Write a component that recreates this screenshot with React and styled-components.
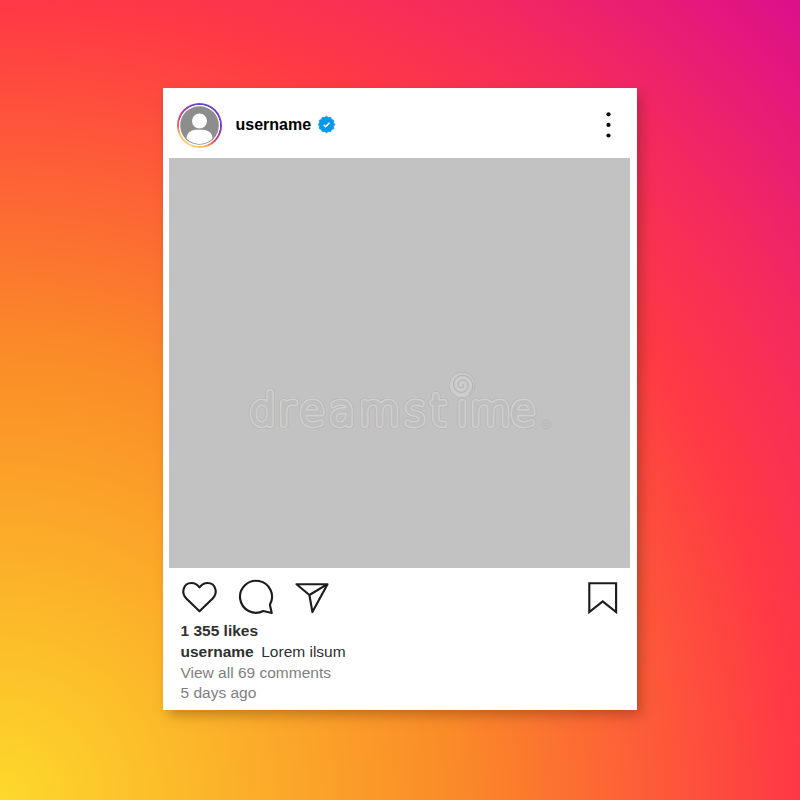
import React from "react";
import styled, { createGlobalStyle } from "styled-components";

const GlobalStyle = createGlobalStyle`
  body { margin: 0; }
  * { box-sizing: border-box; }
`;

const Page = styled.main`
  display: grid;
  place-items: center;
  width: 800px;
  height: 800px;
  padding-bottom: 2px;
  overflow: hidden;
  font-family: "Liberation Sans", Arial, sans-serif;
  background: radial-gradient(
    circle 1131px at 0 100%,
    #fdd92b 0%,
    #fa8a28 40.5%,
    #ff3945 70%,
    #f52b5c 81%,
    #dc0f8b 100%
  );
`;

const Card = styled.article`
  display: flex;
  flex-direction: column;
  width: 474px;
  height: 622px;
  background: #fff;
  box-shadow: 5px 6px 12px -1px rgba(70, 30, 10, 0.34);
`;

const Header = styled.header`
  display: flex;
  align-items: center;
  height: 70px;
  padding: 5px 26px 0 14px;
`;

const HeaderName = styled.h1`
  margin: 0 7px 0 13.5px;
  padding-bottom: 1px;
  font-size: 16px;
  line-height: 20px;
  font-weight: 700;
  color: #000;
`;

const Drawing = styled.svg`
  display: block;
  flex: none;
  overflow: visible;
  margin-left: ${(p) => (p.$end ? "auto" : 0)};
  margin-bottom: ${(p) => p.$lift || 0}px;
`;

const AvatarFrame = styled.div`
  display: grid;
  place-items: center;
  width: 45px;
  height: 45px;
  border-radius: 50%;
  background: radial-gradient(circle, #fff 20.3px, transparent 20.9px),
    conic-gradient(
      #5b48d8 0deg,
      #6a3fd8 60deg,
      #7a36d0 100deg,
      #d42d80 122deg,
      #f0504e 140deg,
      #f8b45c 165deg,
      #fbd873 205deg,
      #f9c062 245deg,
      #ee5a5c 272deg,
      #d92f8f 300deg,
      #8d38c4 330deg,
      #5b48d8 360deg
    );
`;

const Photo = styled.div`
  width: 461px;
  height: 410px;
  margin-left: 6px;
  background: #c2c2c2;
`;

const Actions = styled.div`
  display: flex;
  align-items: flex-start;
  gap: 20px;
  height: 53px;
  padding: 11px 19px 0 18px;
`;

const Caption = styled.div`
  display: grid;
  grid-template-rows: 21px 21px 20px 20px;
  padding-left: 17.5px;
  font-size: 15.5px;
  line-height: 20px;
`;

const Line = styled.p`
  margin: 0;
  color: ${(p) => (p.$muted ? "#808080" : "#303030")};
`;

const Strong = styled.strong`
  margin-right: ${(p) => p.$gap || 0}px;
`;

function Avatar() {
  return (
    <AvatarFrame>
      <Drawing width="39" height="39" viewBox="0 0 39 39">
        <defs>
          <clipPath id="face">
            <circle cx="19.5" cy="19.5" r="18.5" />
          </clipPath>
        </defs>
        <circle cx="19.5" cy="19.5" r="19.3" fill="#8d8d8d" />
        <g clipPath="url(#face)" fill="#fff">
          <circle cx="19.5" cy="15" r="7.5" />
          <path d="M6.500 40v-7.500c0-5 4.500-8.700 9-8.700h8c4.500 0 9 3.700 9 8.700V40z" />
        </g>
      </Drawing>
    </AvatarFrame>
  );
}

function Verified() {
  const points = Array.from({ length: 24 }, (_, i) => {
    const a = (i * Math.PI) / 12;
    const r = i % 2 ? 7.2 : 8.3;
    return `${8.5 + r * Math.sin(a)},${8.5 - r * Math.cos(a)}`;
  }).join(" ");
  return (
    <Drawing width="17" height="17" viewBox="0 0 17 17" $lift={3}>
      <polygon points={points} fill="#0b96ee" stroke="#0b96ee" strokeWidth=".8" strokeLinejoin="round" />
      <path d="m5.600 8.700 2 2 3.900-4" fill="none" stroke="#fff" strokeWidth="1.500" />
    </Drawing>
  );
}

function MoreDots() {
  return (
    <Drawing width="5" height="26" viewBox="0 0 5 26" $end $lift={1} fill="#0b0b0b">
      <circle cx="2.500" cy="2.300" r="2.100" />
      <circle cx="2.500" cy="12.900" r="2.100" />
      <circle cx="2.500" cy="23.500" r="2.100" />
    </Drawing>
  );
}

const outline = {
  height: 37,
  fill: "none",
  stroke: "#1d1d1d",
  strokeWidth: 2.15,
  strokeLinejoin: "round",
};

function Heart() {
  return (
    <Drawing {...outline} width="37" viewBox="0 0 37 37">
      <path d="M18.500 32.300 5.300 19.400C2.500 16.600 1.800 13.500 2.600 10.300 3.500 6.500 6.700 4 10.500 4c3.200 0 6 1.600 8 4.300C20.500 5.600 23.300 4 26.500 4c3.800 0 7 2.500 7.900 6.300.8 3.200.1 6.300-2.700 9.100z" />
    </Drawing>
  );
}

function Comment() {
  return (
    <Drawing {...outline} width="36" viewBox="0 0 36 37">
      <path d="M31.900 25.700A16 16 0 1 0 25.300 32L33.700 34z" />
    </Drawing>
  );
}

function Share() {
  return (
    <Drawing {...outline} width="36" viewBox="0 0 36 37">
      <path d="M2.500 5.200h31L18.400 33 15.400 16z M15.400 16 33.500 5.200" />
    </Drawing>
  );
}

function Bookmark() {
  return (
    <Drawing {...outline} width="32" viewBox="0 0 32 37" $end strokeLinejoin="miter">
      <path d="M3.300 4.200h26.800V33L16.700 22.300 3.300 33z" />
    </Drawing>
  );
}

const WatermarkText = styled.text`
  font-family: "DejaVu Sans Light", "DejaVu Sans", sans-serif;
  font-size: 42px;
  font-weight: 200;
  stroke: ${(p) => p.$tone};
  fill: ${(p) => p.$tone};
  stroke-width: ${(p) => p.$weight}px;
  stroke-linejoin: round;
`;

const TONES = [
  ["#b3b3b3", 7.2],
  ["#d0d0d0", 5.8],
  ["#bfbfbf", 2.8],
];

const LETTER_X = "249 278 299 329 359 404 430 456.500 470 510";

const SWIRL = Array.from({ length: 61 }, (_, i) => {
  const angle = -1 + (i / 60) * Math.PI * 4.6;
  const radius = 0.8 + (i / 60) * 10.6;
  const x = 462 + radius * Math.cos(angle);
  const y = 385 + radius * Math.sin(angle);
  return `${x.toFixed(2)},${y.toFixed(2)}`;
}).join(" ");

function Watermark() {
  return (
    <Drawing width="461" height="410" viewBox="169 158 461 410">
      {TONES.map(([tone, weight]) => (
        <WatermarkText
          key={tone}
          x={LETTER_X}
          y="425"
          $tone={tone}
          $weight={weight}
          aria-hidden={weight < 7}
        >
          dreamstime
        </WatermarkText>
      ))}
      <circle cx="462" cy="385" r="13" fill="#b5b5b5" />
      <circle cx="462" cy="385" r="12.300" fill="#cdcdcd" />
      <polyline points={SWIRL} fill="none" stroke="#b5b5b5" strokeWidth="1.300" strokeLinecap="round" />
      <g fill="none" stroke="#b2b2b2" strokeWidth=".8">
        <circle cx="546.500" cy="424.500" r="4.500" />
        <circle cx="546.500" cy="424.500" r="2" />
      </g>
    </Drawing>
  );
}

export default function App() {
  return (
    <>
      <GlobalStyle />
      <Page>
        <Card>
          <Header>
            <Avatar />
            <HeaderName>username</HeaderName>
            <Verified />
            <MoreDots />
          </Header>
          <Photo>
            <Watermark />
          </Photo>
          <Actions>
            <Heart />
            <Comment />
            <Share />
            <Bookmark />
          </Actions>
          <Caption>
            <Line><Strong>1 355 likes</Strong></Line>
            <Line><Strong $gap={7.500}>username</Strong>Lorem ilsum</Line>
            <Line $muted>View all 69 comments</Line>
            <Line $muted>5 days ago</Line>
          </Caption>
        </Card>
      </Page>
    </>
  );
}
